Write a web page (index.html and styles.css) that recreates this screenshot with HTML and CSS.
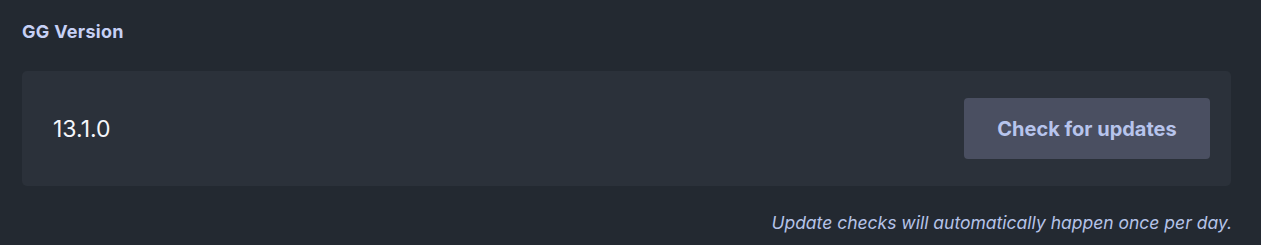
FILE: index.html
```html
<!DOCTYPE html>
<html>
<head>
<meta charset="utf-8">
<link rel="stylesheet" href="styles.css">
</head>
<body>
<div class="page">
  <div class="title">GG Version</div>
  <div class="card">
    <div class="version">13.1.0</div>
    <button class="btn">Check for updates</button>
  </div>
  <div class="note">Update checks will automatically happen once per day.</div>
</div>
</body>
</html>
```
FILE: styles.css
```css
html, body {
  margin: 0;
  padding: 0;
  background: #232931;
  font-family: Inter, "Noto Sans", sans-serif;
}
.page {
  padding: 21px 30px 0 22px;
  display: flex;
  flex-direction: column;
}
.title {
  color: #c6d0f5;
  font-size: 18px;
  font-weight: 700;
  line-height: 22px;
  height: 22px;
  letter-spacing: 0.3px;
}
.card {
  margin-top: 28px;
  background: #2b313a;
  border-radius: 5px;
  height: 115px;
  display: flex;
  align-items: center;
  justify-content: space-between;
  padding: 0 21px 0 31px;
  box-sizing: border-box;
}
.version {
  color: #f4f6fb;
  font-size: 23px;
  font-weight: 400;
}
.btn {
  width: 246px;
  height: 61px;
  border: none;
  border-radius: 4px;
  background: #4a4f61;
  color: #b7c4ec;
  font-family: Inter, "Noto Sans", sans-serif;
  font-size: 20px;
  font-weight: 700;
  padding: 0;
}
.note {
  align-self: flex-end;
  margin-top: 26px;
  margin-right: -1px;
  color: #b5c3e8;
  font-size: 17.5px;
  font-style: italic;
}
```
